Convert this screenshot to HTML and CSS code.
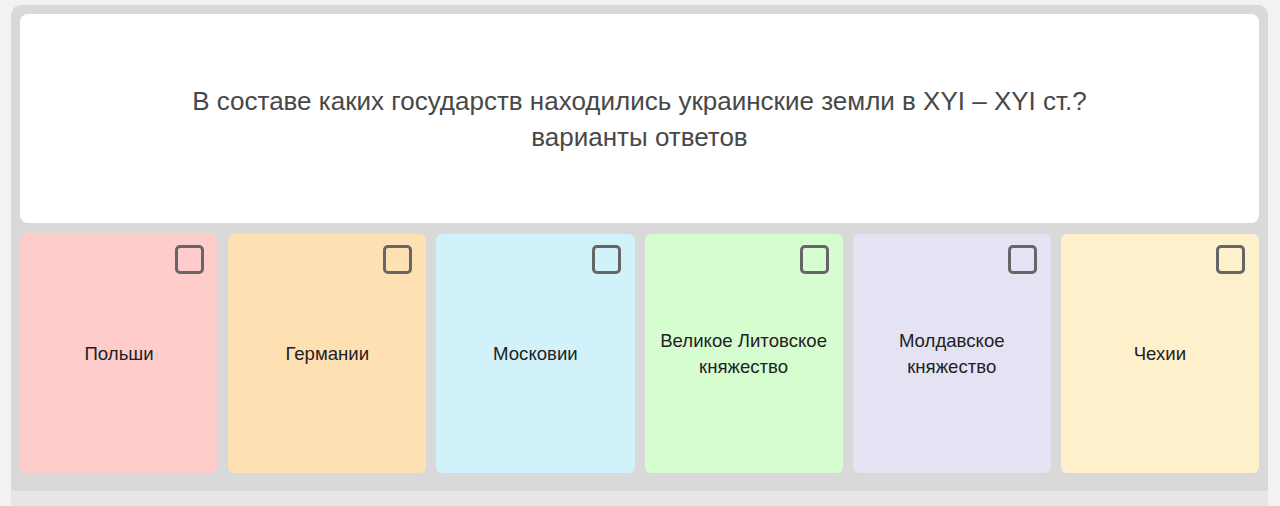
FILE: index.html
```html
<!DOCTYPE html>
<html lang="ru">
<head>
    <meta charset="UTF-8">
    <title>Тест</title>
    <link rel="stylesheet" href="styles.css">
</head>
<body>
    <div class="board">
        <div class="question">
            <p>В составе каких государств находились украинские земли в XYI – XYI ст.?<br>варианты ответов</p>
        </div>
        <div class="answers">
            <div class="answer red"><span class="box"></span><span class="label">Польши</span></div>
            <div class="answer orange"><span class="box"></span><span class="label">Германии</span></div>
            <div class="answer blue"><span class="box"></span><span class="label">Московии</span></div>
            <div class="answer green"><span class="box"></span><span class="label">Великое Литовское княжество</span></div>
            <div class="answer purple"><span class="box"></span><span class="label">Молдавское княжество</span></div>
            <div class="answer yellow"><span class="box"></span><span class="label">Чехии</span></div>
        </div>
    </div>
    <div class="footer"></div>
</body>
</html>
```

FILE: styles.css
```css
html, body {
    margin: 0;
    padding: 0;
    height: 100%;
}
body {
    font-family: "Liberation Sans", Arial, sans-serif;
    background: #f2f2f2;
    padding: 5px 12px 0 11px;
    box-sizing: border-box;
    overflow: hidden;
}
.board {
    background: #d9d9d9;
    border-radius: 10px 10px 0 0;
    padding: 9px 9px 18px 9px;
}
.question {
    background: white;
    border-radius: 8px;
    height: 209px;
    display: flex;
    align-items: center;
    justify-content: center;
    text-align: center;
}
.question p {
    margin: 0;
    font-size: 26px;
    line-height: 36px;
    color: #484848;
}
.answers {
    display: grid;
    grid-template-columns: repeat(6, 1fr);
    gap: 10px;
    margin-top: 11px;
}
.answer {
    position: relative;
    height: 239px;
    border-radius: 6px;
    display: flex;
    align-items: center;
    justify-content: center;
    text-align: center;
    padding: 0 14px;
}
.label {
    font-size: 18.6px;
    line-height: 26px;
    color: #222;
}
.box {
    position: absolute;
    top: 11px;
    right: 14px;
    width: 23px;
    height: 23px;
    border: 3px solid #666;
    border-radius: 5px;
}
.red { background: #ffcccc; }
.orange { background: #ffe0b3; }
.blue { background: #d1f2fb; }
.green { background: #d6fdd0; }
.purple { background: #e4e2f3; }
.yellow { background: #fff0cc; }
.footer {
    background: #e6e6e6;
    height: 20px;
}
```
